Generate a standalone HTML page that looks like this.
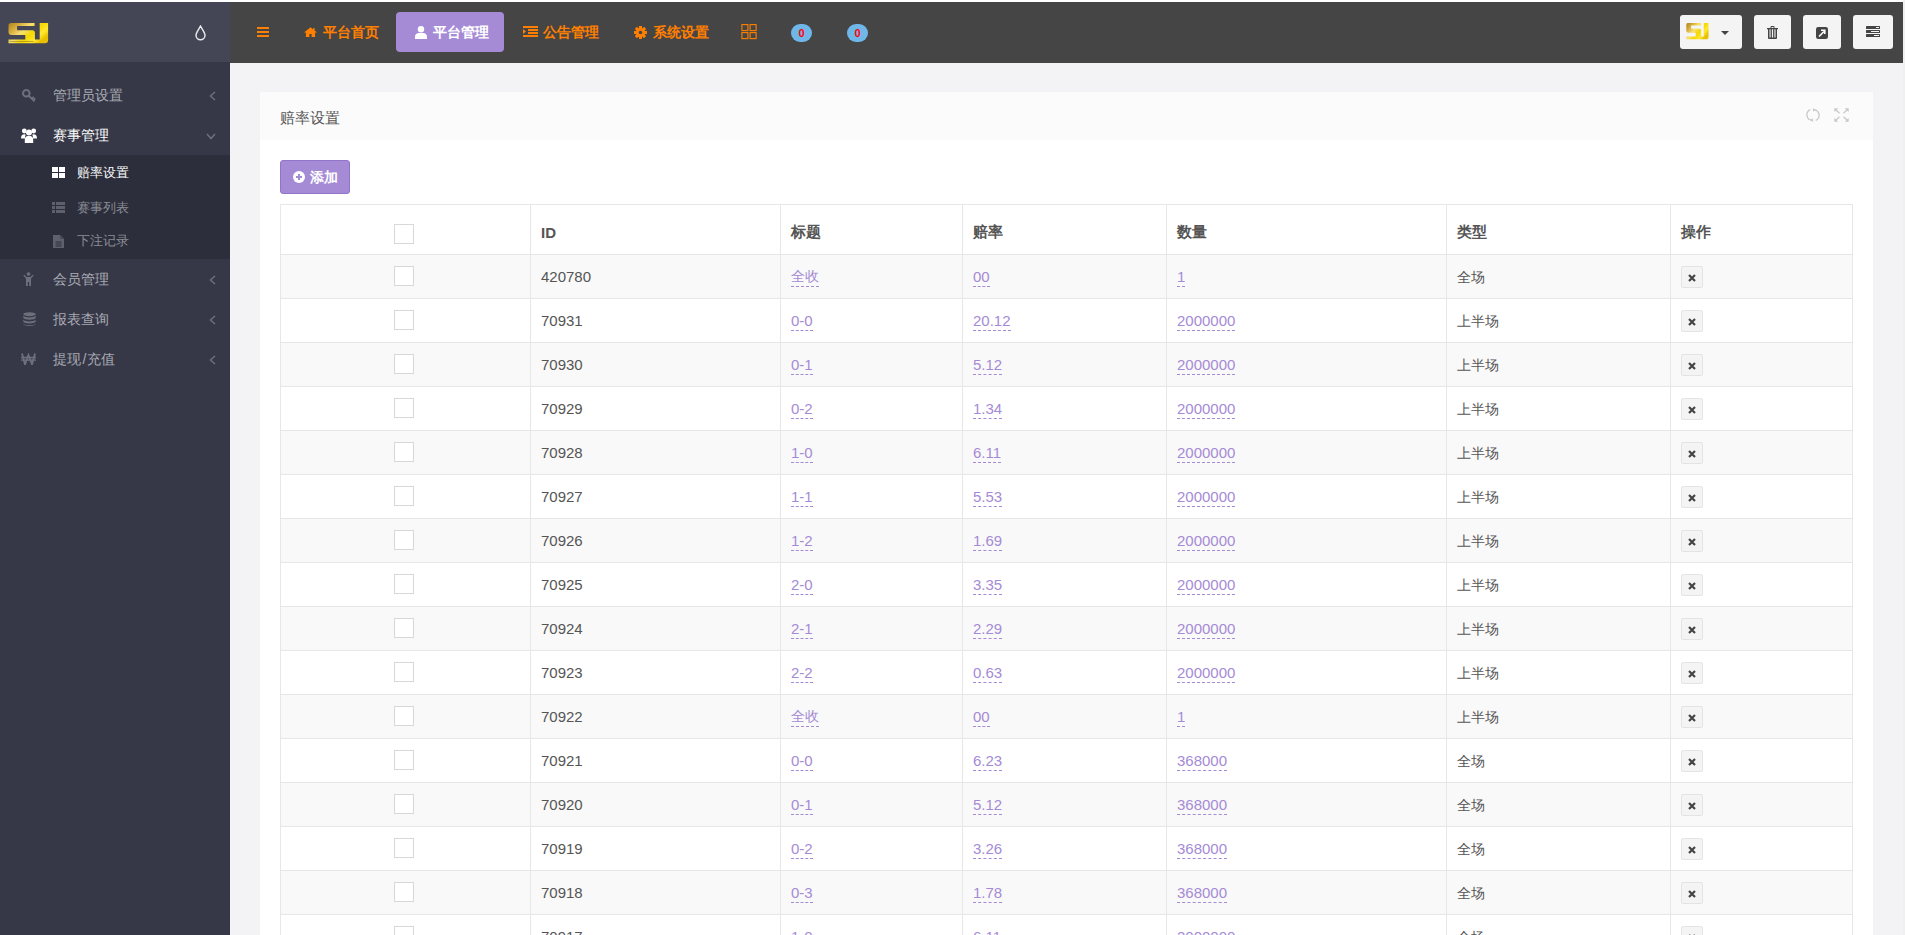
<!DOCTYPE html>
<html><head><meta charset="utf-8">
<style>
*{box-sizing:border-box;margin:0;padding:0}
html,body{width:1905px;height:935px;overflow:hidden;background:#fff;font-family:"Liberation Sans",sans-serif;font-size:14px;color:#676a6c}
.abs{position:absolute}
#logo{position:absolute;left:0;top:2px;width:230px;height:60px;background:#444656}
#header{position:absolute;left:230px;top:2px;width:1673px;height:61px;background:#454545}
#sidebar{position:absolute;left:0;top:62px;width:230px;height:873px;background:#363847}
#main{position:absolute;left:230px;top:63px;width:1673px;height:872px;background:#f3f3f6}
#rstrip{position:absolute;left:1903px;top:0;width:2px;height:935px;background:#f0f0f0}
.nav{position:absolute;top:10px;height:40px;line-height:40px;color:#ff7f00;font-weight:bold;font-size:14px;white-space:nowrap}
.hbtn{position:absolute;top:13px;height:34px;background:#f4f4f4;border-radius:3px}
.mi{position:absolute;left:0;width:230px;height:40px;line-height:40px;color:#a9abb4;font-size:14px}
.mi .t{position:absolute;left:53px;top:0}
.mi svg{position:absolute}
.sub{position:absolute;left:0;width:230px;height:34px;line-height:34px;color:#8a8c95;font-size:13px}
.sub .t{position:absolute;left:77px;top:0}
.sub svg{position:absolute}
#panel{position:absolute;left:260px;top:92px;width:1613px;height:843px;background:#fff}
#phead{position:absolute;left:0;top:0;width:1613px;height:48px;background:#fbfbfb}
#ptitle{position:absolute;left:20px;top:2px;line-height:48px;font-size:15px;color:#555}
#addbtn{position:absolute;left:280px;top:160px;width:70px;height:34px;background:#a58bd5;border:1px solid #9274c9;border-radius:3px;color:#fff;font-size:13px;line-height:32px}
table{position:absolute;left:280px;top:204px;border-collapse:collapse;table-layout:fixed}
td,th{border:1px solid #e7e7e7;height:44px;padding:0 10px;text-align:left;font-size:15px;color:#555;font-weight:normal;white-space:nowrap}
th{height:50px;font-weight:bold;font-size:15px;color:#555}
td.c0,th.c0{text-align:center}
tr.odd td{background:#f9f9f9}
.cb{display:inline-block;width:20px;height:20px;border:1px solid #d8d8d8;background:#fff;vertical-align:middle}
a.e{color:#a58bd5;text-decoration:none;border-bottom:1px dashed #a58bd5;padding-bottom:1px}
.del{display:inline-flex;align-items:center;justify-content:center;width:22px;height:22px;background:#f4f4f4;border:1px solid #e4e4e4;border-radius:2px;vertical-align:middle}
.badge{top:22px;width:21px;height:18px;border-radius:9px;background:#70b7e9;color:#f00;font-weight:bold;font-size:11px;line-height:18px;text-align:center}
.mi svg,.sub svg{position:absolute}
.cj{font-size:14px}
th{padding-top:5px}
th .cb{position:relative;top:2px;left:-2px}
td .cb{position:relative;top:-1px;left:-2px}
a.e.cj{padding-bottom:2px}
.del svg{position:relative;top:1px}
td span.cj{position:relative;top:1px}

</style></head><body>
<div id="logo">
<svg class="abs" style="left:8px;top:21px" width="41" height="21" viewBox="0 0 41 21">
<defs><linearGradient id="g1" x1="0" y1="0" x2="1" y2="0.6"><stop offset="0" stop-color="#b0801a"/><stop offset="0.25" stop-color="#d8b040"/><stop offset="0.45" stop-color="#f8e070"/><stop offset="0.65" stop-color="#f5d800"/><stop offset="0.85" stop-color="#ffe830"/><stop offset="1" stop-color="#e8c000"/></linearGradient></defs>
<path fill="url(#g1)" d="M3 0H26.6V3.1H9.1V7.2H24.4A2.5 2.5 0 0 1 26.9 9.7V16.6H17.3V12H3.5A3 3 0 0 1 0.5 9V2.5A2.5 2.5 0 0 1 3 0ZM31.7 0H40.1V17.2A3 3 0 0 1 37.1 20.2H0.5V16.6H31.7Z"/>
<rect x="1.5" y="18" width="24" height="0.7" fill="#6a5520" opacity="0.6"/>
</svg>
<svg class="abs" style="left:194px;top:23px" width="13" height="16" viewBox="0 0 13 16"><path d="M6.5 1.2C5 4 2 7.5 2 10.3A4.5 4.5 0 0 0 11 10.3C11 7.5 8 4 6.5 1.2Z" fill="none" stroke="#e8e8e8" stroke-width="1.5"/></svg>
</div>
<div id="header">
<svg class="abs" style="left:27px;top:25px" width="12" height="10" viewBox="0 0 12 10"><rect x="0" y="0" width="12" height="2" fill="#ff8000"/><rect x="0" y="4" width="12" height="2" fill="#ff8000"/><rect x="0" y="8" width="12" height="2" fill="#ff8000"/></svg>
<svg class="abs" style="left:74px;top:25px" width="13" height="10" viewBox="0 0 13 10"><path d="M6.5 0.2L0 5.6H1.9V10H5.4V7H7.6V10H11.1V5.6H13L10.6 3.6V0.9H9.2V2.5Z" fill="#ff8000"/></svg>
<div class="nav" style="left:93px">平台首页</div>
<div class="abs" style="left:166px;top:10px;width:108px;height:40px;background:#a58bd5;border-radius:4px"></div>
<svg class="abs" style="left:185px;top:24px" width="12" height="13" viewBox="0 0 12 13"><circle cx="6" cy="3.2" r="3.2" fill="#fff"/><path d="M0 13V10.5C0 8.3 2 7 3.5 7H8.5C10 7 12 8.3 12 10.5V13Z" fill="#fff"/></svg>
<div class="nav" style="left:203px;color:#fff">平台管理</div>
<svg class="abs" style="left:293px;top:24px" width="15" height="11" viewBox="0 0 15 11"><rect x="0" y="0" width="15" height="2" fill="#ff8000"/><rect x="5" y="3" width="10" height="2" fill="#ff8000"/><rect x="5" y="6" width="10" height="2" fill="#ff8000"/><rect x="0" y="9" width="15" height="2" fill="#ff8000"/><path d="M0 3L3 5.5L0 8Z" fill="#ff8000"/></svg>
<div class="nav" style="left:313px">公告管理</div>
<svg class="abs" style="left:404px;top:24px" width="13" height="13" viewBox="-6.5 -6.5 13 13"><g fill="#ff8000"><circle r="4.6"/><rect x="-1.5" y="-6.5" width="3" height="13"/><rect x="-6.5" y="-1.5" width="13" height="3"/><rect x="-1.5" y="-6.5" width="3" height="13" transform="rotate(45)"/><rect x="-1.5" y="-6.5" width="3" height="13" transform="rotate(-45)"/></g><circle r="1.8" fill="#454545"/></svg>
<div class="nav" style="left:423px">系统设置</div>
<svg class="abs" style="left:511px;top:22px" width="17" height="16" viewBox="0 0 17 16"><g fill="none" stroke="#ff8000" stroke-width="1.1"><rect x="0.9" y="0.6" width="6" height="6"/><rect x="9.1" y="0.6" width="6" height="6"/><rect x="0.9" y="8.6" width="6" height="6"/><rect x="9.1" y="8.6" width="6" height="6"/></g></svg>
<div class="abs badge" style="left:561px">0</div>
<div class="abs badge" style="left:617px">0</div>
<div class="hbtn" style="left:1450px;width:62px">
<svg class="abs" style="left:6px;top:8px" width="23" height="17" viewBox="0 0 41 21" preserveAspectRatio="none"><path fill="url(#g1)" d="M3 0H26.6V3.1H9.1V7.2H24.4A2.5 2.5 0 0 1 26.9 9.7V16.6H17.3V12H3.5A3 3 0 0 1 0.5 9V2.5A2.5 2.5 0 0 1 3 0ZM31.7 0H40.1V17.2A3 3 0 0 1 37.1 20.2H0.5V16.6H31.7Z"/></svg>
<svg class="abs" style="left:41px;top:16px" width="8" height="4" viewBox="0 0 8 4"><path d="M0 0H8L4 4Z" fill="#444"/></svg>
</div>
<div class="hbtn" style="left:1524px;width:37px">
<svg class="abs" style="left:13px;top:11px" width="11" height="13" viewBox="0 0 11 13"><path d="M3.5 2V1A1 1 0 0 1 4.5 0H6.5A1 1 0 0 1 7.5 1V2H11V3.3H10V12A1 1 0 0 1 9 13H2A1 1 0 0 1 1 12V3.3H0V2ZM4.5 2H6.5V1H4.5ZM2.5 3.3V11.6H3.6V3.3ZM4.9 3.3V11.6H6.1V3.3ZM7.4 3.3V11.6H8.5V3.3Z" fill="#444" fill-rule="evenodd"/></svg>
</div>
<div class="hbtn" style="left:1573px;width:38px">
<svg class="abs" style="left:13px;top:12px" width="12" height="12" viewBox="0 0 12 12"><rect x="0" y="0" width="12" height="12" rx="2.2" fill="#444"/><path d="M3 9.5L8 4.5M5 3.2H8.8V7" stroke="#fff" stroke-width="1.6" fill="none"/></svg>
</div>
<div class="hbtn" style="left:1623px;width:40px">
<svg class="abs" style="left:13px;top:11px" width="14" height="11" viewBox="0 0 14 11"><g fill="#444"><rect x="0" y="0" width="14" height="3" rx="0.5"/><rect x="0" y="4" width="14" height="3" rx="0.5"/><rect x="0" y="8" width="14" height="3" rx="0.5"/></g><g fill="#f4f4f4"><rect x="10" y="1" width="3" height="1"/><rect x="5" y="5" width="8" height="1"/><rect x="8" y="9" width="5" height="1"/></g></svg>
</div>
</div>
<div id="sidebar">
<div class="mi" style="top:13px">
<svg style="left:22px;top:14px" width="14" height="13" viewBox="0 0 14 13"><circle cx="4.3" cy="4.3" r="3.3" fill="none" stroke="#6d707c" stroke-width="2"/><path d="M6.5 6.5L12.5 12.3M10 9.5L11.8 7.8M11.5 11L13.2 9.4" stroke="#6d707c" stroke-width="1.8" fill="none"/></svg>
<span class="t">管理员设置</span>
<svg style="left:209px;top:16px" width="7" height="10" viewBox="0 0 7 10"><path d="M6 1L1.5 5L6 9" stroke="#6d707c" stroke-width="1.5" fill="none"/></svg>
</div>
<div class="mi" style="top:53px;color:#fff">
<svg style="left:21px;top:13px" width="16" height="15" viewBox="0 0 16 15"><g fill="#fff"><circle cx="3.3" cy="3" r="2.4"/><circle cx="12.7" cy="3" r="2.4"/><circle cx="8" cy="4.6" r="3"/><path d="M0 10.5C0 7.5 1.3 6.2 3.3 6.2C4 6.2 4.5 6.5 4.8 6.8C4.3 7.6 4 8.6 4 10.5Z"/><path d="M16 10.5C16 7.5 14.7 6.2 12.7 6.2C12 6.2 11.5 6.5 11.2 6.8C11.7 7.6 12 8.6 12 10.5Z"/><path d="M3.8 15V11.8C3.8 9.5 5 8 7 8H9C11 8 12.2 9.5 12.2 11.8V15Z"/></g></svg>
<span class="t">赛事管理</span>
<svg style="left:206px;top:18px" width="10" height="7" viewBox="0 0 10 7"><path d="M1 1L5 5.5L9 1" stroke="#6d707c" stroke-width="1.5" fill="none"/></svg>
</div>
<div class="abs" style="left:0;top:93px;width:230px;height:104px;background:#2c2e3b"></div>
<div class="sub" style="top:94px;color:#fff">
<svg style="left:52px;top:11px" width="13" height="11" viewBox="0 0 13 11"><g fill="#fff"><rect x="0" y="0" width="6" height="5"/><rect x="7" y="0" width="6" height="5"/><rect x="0" y="6" width="6" height="5"/><rect x="7" y="6" width="6" height="5"/></g></svg>
<span class="t">赔率设置</span>
</div>
<div class="sub" style="top:129px">
<svg style="left:52px;top:11px" width="13" height="11" viewBox="0 0 13 11"><g fill="#5e616d"><rect x="0" y="0" width="3" height="3"/><rect x="4" y="0" width="9" height="3"/><rect x="0" y="4" width="3" height="3"/><rect x="4" y="4" width="9" height="3"/><rect x="0" y="8" width="3" height="3"/><rect x="4" y="8" width="9" height="3"/></g></svg>
<span class="t">赛事列表</span>
</div>
<div class="sub" style="top:162px">
<svg style="left:53px;top:11px" width="11" height="13" viewBox="0 0 11 13"><path d="M0 0H7L11 4V13H0Z" fill="#5e616d"/><path d="M7 0V4H11" fill="#4a4d58"/><g fill="#2c2e3b"><rect x="2.5" y="6.5" width="6" height="1"/><rect x="2.5" y="8.5" width="6" height="1"/><rect x="2.5" y="10.5" width="6" height="1"/></g></svg>
<span class="t">下注记录</span>
</div>
<div class="mi" style="top:197px">
<svg style="left:23px;top:13px" width="11" height="14" viewBox="0 0 11 14"><g fill="#6d707c"><circle cx="5.5" cy="2" r="1.8"/><path d="M0.3 3.5L1.2 2.8L3.6 5H7.4L9.8 2.8L10.7 3.5L8 6.5V14H6.2V10H4.8V14H3V6.5Z"/></g></svg>
<span class="t">会员管理</span>
<svg style="left:209px;top:16px" width="7" height="10" viewBox="0 0 7 10"><path d="M6 1L1.5 5L6 9" stroke="#6d707c" stroke-width="1.5" fill="none"/></svg>
</div>
<div class="mi" style="top:237px">
<svg style="left:23px;top:13px" width="13" height="14" viewBox="0 0 13 14"><g fill="#6d707c"><ellipse cx="6.5" cy="2.2" rx="6.2" ry="2"/><path d="M0.3 3.6C1 5 4 5.5 6.5 5.5S12 5 12.7 3.6V5.8C12 7.2 9 7.7 6.5 7.7S1 7.2 0.3 5.8Z"/><path d="M0.3 7.6C1 9 4 9.5 6.5 9.5S12 9 12.7 7.6V9.6C12 11 9 11.5 6.5 11.5S1 11 0.3 9.6Z"/><path d="M0.3 11.4C1 12.8 4 13.3 6.5 13.3S12 12.8 12.7 11.4V12C12 13.4 9 14 6.5 14S1 13.4 0.3 12Z"/></g></svg>
<span class="t">报表查询</span>
<svg style="left:209px;top:16px" width="7" height="10" viewBox="0 0 7 10"><path d="M6 1L1.5 5L6 9" stroke="#6d707c" stroke-width="1.5" fill="none"/></svg>
</div>
<div class="mi" style="top:277px">
<svg style="left:21px;top:14px" width="15" height="12" viewBox="0 0 15 12"><g fill="none" stroke="#6d707c" stroke-width="1.8"><path d="M1 0.5L4 11.5L7.5 2L11 11.5L14 0.5"/><path d="M0 4.5H15M0 7.2H15" stroke-width="1.3"/></g></svg>
<span class="t">提现<span style="margin:0 1px 0 1.5px">/</span>充值</span>
<svg style="left:209px;top:16px" width="7" height="10" viewBox="0 0 7 10"><path d="M6 1L1.5 5L6 9" stroke="#6d707c" stroke-width="1.5" fill="none"/></svg>
</div>
</div>
<div id="main"></div>
<div id="rstrip"></div>
<div id="panel"><div id="phead"><div id="ptitle">赔率设置</div>
<svg class="abs" style="left:1546px;top:16px" width="14" height="14" viewBox="0 0 14 14"><g fill="none" stroke="#c8c8c8" stroke-width="1.3"><path d="M4.3 1.6A5.6 5.6 0 0 0 5.2 12.2"/><path d="M9.7 12.4A5.6 5.6 0 0 0 8.8 1.8"/></g><g fill="#c8c8c8"><path d="M6.8 0.2L9.8 1.8L7.2 3.8Z"/><path d="M7.2 13.8L4.2 12.2L6.8 10.2Z"/></g></svg>
<svg class="abs" style="left:1574px;top:16px" width="15" height="14" viewBox="0 0 15 14"><g fill="none" stroke="#c8c8c8" stroke-width="1.2"><path d="M1.5 1.5L5.5 5.3M13.5 1.5L9.5 5.3M1.5 12.5L5.5 8.7M13.5 12.5L9.5 8.7"/></g><g fill="#c8c8c8"><path d="M0.3 0.3H4.3L0.3 4.1Z"/><path d="M14.7 0.3H10.7L14.7 4.1Z"/><path d="M0.3 13.7H4.3L0.3 9.9Z"/><path d="M14.7 13.7H10.7L14.7 9.9Z"/></g></svg>
</div></div>
<div id="addbtn"><svg class="abs" style="left:12px;top:10px" width="12" height="12" viewBox="0 0 12 12"><circle cx="6" cy="6" r="6" fill="#fff"/><path d="M6 3V9M3 6H9" stroke="#a58bd5" stroke-width="2"/></svg><span class="abs" style="left:29px;top:0;font-weight:bold;font-size:14px">添加</span></div>
<table><colgroup><col style="width:250px"><col style="width:250px"><col style="width:182px"><col style="width:204px"><col style="width:280px"><col style="width:224px"><col style="width:182px"></colgroup><tr class="hd"><th class="c0"><span class="cb"></span></th><th>ID</th><th>标题</th><th>赔率</th><th>数量</th><th>类型</th><th>操作</th></tr><tr class="odd"><td class="c0"><span class="cb"></span></td><td>420780</td><td><a class="e cj">全收</a></td><td><a class="e">00</a></td><td><a class="e">1</a></td><td><span class="cj">全场</span></td><td><span class="del"><svg width="8" height="8" viewBox="0 0 8 8"><path d="M1 1L7 7M7 1L1 7" stroke="#454545" stroke-width="2.2" stroke-linecap="butt"/></svg></span></td></tr><tr class=""><td class="c0"><span class="cb"></span></td><td>70931</td><td><a class="e">0-0</a></td><td><a class="e">20.12</a></td><td><a class="e">2000000</a></td><td><span class="cj">上半场</span></td><td><span class="del"><svg width="8" height="8" viewBox="0 0 8 8"><path d="M1 1L7 7M7 1L1 7" stroke="#454545" stroke-width="2.2" stroke-linecap="butt"/></svg></span></td></tr><tr class="odd"><td class="c0"><span class="cb"></span></td><td>70930</td><td><a class="e">0-1</a></td><td><a class="e">5.12</a></td><td><a class="e">2000000</a></td><td><span class="cj">上半场</span></td><td><span class="del"><svg width="8" height="8" viewBox="0 0 8 8"><path d="M1 1L7 7M7 1L1 7" stroke="#454545" stroke-width="2.2" stroke-linecap="butt"/></svg></span></td></tr><tr class=""><td class="c0"><span class="cb"></span></td><td>70929</td><td><a class="e">0-2</a></td><td><a class="e">1.34</a></td><td><a class="e">2000000</a></td><td><span class="cj">上半场</span></td><td><span class="del"><svg width="8" height="8" viewBox="0 0 8 8"><path d="M1 1L7 7M7 1L1 7" stroke="#454545" stroke-width="2.2" stroke-linecap="butt"/></svg></span></td></tr><tr class="odd"><td class="c0"><span class="cb"></span></td><td>70928</td><td><a class="e">1-0</a></td><td><a class="e">6.11</a></td><td><a class="e">2000000</a></td><td><span class="cj">上半场</span></td><td><span class="del"><svg width="8" height="8" viewBox="0 0 8 8"><path d="M1 1L7 7M7 1L1 7" stroke="#454545" stroke-width="2.2" stroke-linecap="butt"/></svg></span></td></tr><tr class=""><td class="c0"><span class="cb"></span></td><td>70927</td><td><a class="e">1-1</a></td><td><a class="e">5.53</a></td><td><a class="e">2000000</a></td><td><span class="cj">上半场</span></td><td><span class="del"><svg width="8" height="8" viewBox="0 0 8 8"><path d="M1 1L7 7M7 1L1 7" stroke="#454545" stroke-width="2.2" stroke-linecap="butt"/></svg></span></td></tr><tr class="odd"><td class="c0"><span class="cb"></span></td><td>70926</td><td><a class="e">1-2</a></td><td><a class="e">1.69</a></td><td><a class="e">2000000</a></td><td><span class="cj">上半场</span></td><td><span class="del"><svg width="8" height="8" viewBox="0 0 8 8"><path d="M1 1L7 7M7 1L1 7" stroke="#454545" stroke-width="2.2" stroke-linecap="butt"/></svg></span></td></tr><tr class=""><td class="c0"><span class="cb"></span></td><td>70925</td><td><a class="e">2-0</a></td><td><a class="e">3.35</a></td><td><a class="e">2000000</a></td><td><span class="cj">上半场</span></td><td><span class="del"><svg width="8" height="8" viewBox="0 0 8 8"><path d="M1 1L7 7M7 1L1 7" stroke="#454545" stroke-width="2.2" stroke-linecap="butt"/></svg></span></td></tr><tr class="odd"><td class="c0"><span class="cb"></span></td><td>70924</td><td><a class="e">2-1</a></td><td><a class="e">2.29</a></td><td><a class="e">2000000</a></td><td><span class="cj">上半场</span></td><td><span class="del"><svg width="8" height="8" viewBox="0 0 8 8"><path d="M1 1L7 7M7 1L1 7" stroke="#454545" stroke-width="2.2" stroke-linecap="butt"/></svg></span></td></tr><tr class=""><td class="c0"><span class="cb"></span></td><td>70923</td><td><a class="e">2-2</a></td><td><a class="e">0.63</a></td><td><a class="e">2000000</a></td><td><span class="cj">上半场</span></td><td><span class="del"><svg width="8" height="8" viewBox="0 0 8 8"><path d="M1 1L7 7M7 1L1 7" stroke="#454545" stroke-width="2.2" stroke-linecap="butt"/></svg></span></td></tr><tr class="odd"><td class="c0"><span class="cb"></span></td><td>70922</td><td><a class="e cj">全收</a></td><td><a class="e">00</a></td><td><a class="e">1</a></td><td><span class="cj">上半场</span></td><td><span class="del"><svg width="8" height="8" viewBox="0 0 8 8"><path d="M1 1L7 7M7 1L1 7" stroke="#454545" stroke-width="2.2" stroke-linecap="butt"/></svg></span></td></tr><tr class=""><td class="c0"><span class="cb"></span></td><td>70921</td><td><a class="e">0-0</a></td><td><a class="e">6.23</a></td><td><a class="e">368000</a></td><td><span class="cj">全场</span></td><td><span class="del"><svg width="8" height="8" viewBox="0 0 8 8"><path d="M1 1L7 7M7 1L1 7" stroke="#454545" stroke-width="2.2" stroke-linecap="butt"/></svg></span></td></tr><tr class="odd"><td class="c0"><span class="cb"></span></td><td>70920</td><td><a class="e">0-1</a></td><td><a class="e">5.12</a></td><td><a class="e">368000</a></td><td><span class="cj">全场</span></td><td><span class="del"><svg width="8" height="8" viewBox="0 0 8 8"><path d="M1 1L7 7M7 1L1 7" stroke="#454545" stroke-width="2.2" stroke-linecap="butt"/></svg></span></td></tr><tr class=""><td class="c0"><span class="cb"></span></td><td>70919</td><td><a class="e">0-2</a></td><td><a class="e">3.26</a></td><td><a class="e">368000</a></td><td><span class="cj">全场</span></td><td><span class="del"><svg width="8" height="8" viewBox="0 0 8 8"><path d="M1 1L7 7M7 1L1 7" stroke="#454545" stroke-width="2.2" stroke-linecap="butt"/></svg></span></td></tr><tr class="odd"><td class="c0"><span class="cb"></span></td><td>70918</td><td><a class="e">0-3</a></td><td><a class="e">1.78</a></td><td><a class="e">368000</a></td><td><span class="cj">全场</span></td><td><span class="del"><svg width="8" height="8" viewBox="0 0 8 8"><path d="M1 1L7 7M7 1L1 7" stroke="#454545" stroke-width="2.2" stroke-linecap="butt"/></svg></span></td></tr><tr class=""><td class="c0"><span class="cb"></span></td><td>70917</td><td><a class="e">1-0</a></td><td><a class="e">6.11</a></td><td><a class="e">2000000</a></td><td><span class="cj">全场</span></td><td><span class="del"><svg width="8" height="8" viewBox="0 0 8 8"><path d="M1 1L7 7M7 1L1 7" stroke="#454545" stroke-width="2.2" stroke-linecap="butt"/></svg></span></td></tr></table>

</body></html>
